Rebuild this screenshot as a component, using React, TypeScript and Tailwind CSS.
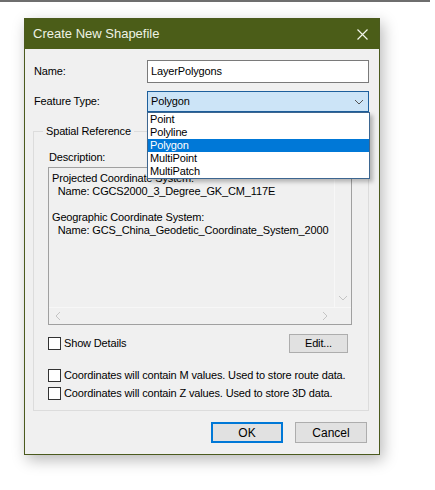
import { useState } from "react";

const font = { fontFamily: '"Liberation Sans", Arial, sans-serif' };

const featureTypes = ["Point", "Polyline", "Polygon", "MultiPoint", "MultiPatch"];

function CheckBox({ label, checked, onChange }: { label: string; checked: boolean; onChange: () => void }) {
  return (
    <label className="flex items-center gap-[3px] h-[13px] cursor-default" onClick={onChange}>
      <span className="w-[13px] h-[13px] border border-[#333333] bg-white flex items-center justify-center text-[10px] leading-none">
        {checked ? "✓" : ""}
      </span>
      <span>{label}</span>
    </label>
  );
}

function Chevron({ dir, className }: { dir: "down" | "left" | "right"; className?: string }) {
  const d =
    dir === "down" ? "M1 3 L5 7 L9 3" : dir === "left" ? "M6 1 L2 5 L6 9" : "M3 1 L7 5 L3 9";
  return (
    <svg width="10" height="10" viewBox="0 0 10 10" className={className}>
      <path d={d} fill="none" stroke="currentColor" strokeWidth="1" />
    </svg>
  );
}

export default function App() {
  const [showDetails, setShowDetails] = useState(false);
  const [mValues, setMValues] = useState(false);
  const [zValues, setZValues] = useState(false);
  const [featureType, setFeatureType] = useState("Polygon");

  return (
    <div className="w-[435px] h-[490px] bg-white text-[11px] tracking-[-0.15px] text-black" style={font}>
      {/* desktop edge */}
      <div className="w-[430px] h-[2px] bg-[#6e6e6e]" />

      {/* dialog */}
      <div className="ml-[24px] mt-[16px] w-[356px] h-[437px] border border-[#4b5a1e] bg-[#f0f0f0] flex flex-col shadow-[3px_5px_14px_rgba(0,0,0,0.28)]">
        {/* title bar */}
        <div className="h-[30px] bg-[#4b5d18] flex items-center justify-between pl-[8px] pr-[11px] text-[#eef2e4]">
          <span className="text-[13px] tracking-normal">Create New Shapefile</span>
          <svg width="11" height="11" viewBox="0 0 11 11">
            <path d="M0.5 0.5 L10.5 10.5 M10.5 0.5 L0.5 10.5" stroke="#f2f5ea" strokeWidth="1.2" />
          </svg>
        </div>

        {/* body */}
        <div className="flex-1 flex flex-col pt-[11px] pl-[9px] pr-[10px]">
          {/* Name */}
          <div className="flex items-center h-[23px]">
            <span className="w-[113px]">Name:</span>
            <div className="flex-1 h-full border border-[#7a7a7a] bg-white flex items-center pl-[3px]">
              LayerPolygons
            </div>
          </div>

          {/* Feature Type */}
          <div className="flex items-center h-[21px] mt-[8px]">
            <span className="w-[113px]">Feature Type:</span>
            <div className="relative flex-1 h-full">
              <div className="h-full border border-[#1d5f9c] bg-[#cce4f7] flex items-center justify-between pl-[3px] pr-[4px]">
                <span>{featureType}</span>
                <Chevron dir="down" className="text-[#555555]" />
              </div>
              {/* dropdown list */}
              <div className="absolute left-0 top-full w-[223px] border border-[#3d6690] bg-white z-10 shadow-[3px_3px_4px_rgba(0,0,0,0.25)]">
                {featureTypes.map((t) => (
                  <div
                    key={t}
                    onClick={() => setFeatureType(t)}
                    className={`h-[13px] leading-[13px] pl-[2px] ${
                      t === "Polygon" ? "bg-[#0078d7] text-white" : ""
                    }`}
                  >
                    {t}
                  </div>
                ))}
              </div>
            </div>
          </div>

          {/* Spatial Reference group */}
          <div className="mt-[19px] -ml-px w-[336px] border border-[#dcdcdc] pl-[14px] pb-[10px] flex flex-col">
            <span className="-mt-[8px] -ml-[5px] self-start px-[3px] h-[14px] leading-[14px] bg-[#f0f0f0]">
              Spatial Reference
            </span>

            <span className="mt-[12px] ml-px h-[14px] leading-[14px]">Description:</span>

            {/* description box */}
            <div className="mt-[3px] w-[304px] h-[158px] border border-[#a0a0a0] bg-[#f0f0f0] flex flex-col">
              <div className="flex-1 flex min-h-0">
                <div className="flex-1 pt-[4px] pl-[3px] leading-[13px] whitespace-pre overflow-hidden">
                  <div>Projected Coordinate System:</div>
                  <div>  Name: CGCS2000_3_Degree_GK_CM_117E</div>
                  <div>&nbsp;</div>
                  <div>Geographic Coordinate System:</div>
                  <div>  Name: GCS_China_Geodetic_Coordinate_System_2000</div>
                </div>
                <div className="w-[17px] border-l border-[#f7f7f7] flex flex-col justify-end items-center pb-[4px]">
                  <Chevron dir="down" className="text-[#c4c4c4]" />
                </div>
              </div>
              <div className="h-[17px] flex border-t border-[#f7f7f7]">
                <div className="flex-1 flex items-center justify-between pl-[5px] pr-[4px]">
                  <Chevron dir="left" className="text-[#c4c4c4]" />
                  <Chevron dir="right" className="text-[#c4c4c4]" />
                </div>
                <div className="w-[17px]" />
              </div>
            </div>

            {/* Show details + Edit */}
            <div className="mt-[9px] h-[19px] w-[300px] flex items-center justify-between">
              <CheckBox label="Show Details" checked={showDetails} onChange={() => setShowDetails(!showDetails)} />
              <button className="w-[59px] h-[19px] border border-[#adadad] bg-[#e1e1e1] text-[11px]">Edit...</button>
            </div>

            <div className="mt-[16px]">
              <CheckBox
                label="Coordinates will contain M values. Used to store route data."
                checked={mValues}
                onChange={() => setMValues(!mValues)}
              />
            </div>
            <div className="mt-[5px]">
              <CheckBox
                label="Coordinates will contain Z values. Used to store 3D data."
                checked={zValues}
                onChange={() => setZValues(!zValues)}
              />
            </div>
          </div>

          {/* buttons */}
          <div className="mt-[11px] flex justify-end gap-[12px] pr-[2px]">
            <button className="w-[72px] h-[21px] border-2 border-[#0078d7] bg-[#e1e1e1] text-[12px] tracking-normal">
              OK
            </button>
            <button className="w-[72px] h-[21px] border border-[#adadad] bg-[#e1e1e1] text-[12px] tracking-normal">
              Cancel
            </button>
          </div>
        </div>
      </div>
    </div>
  );
}
